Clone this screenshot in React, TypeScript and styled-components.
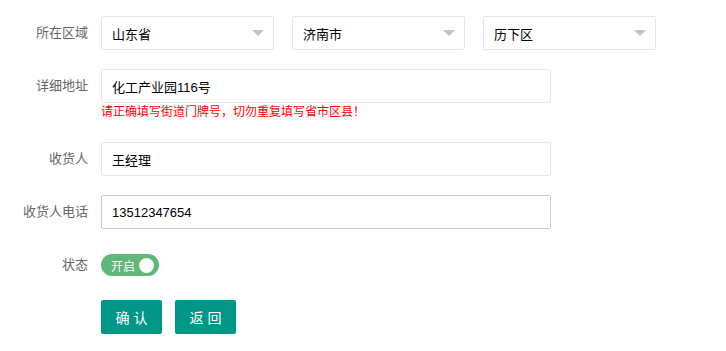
import React from "react";
import styled, { createGlobalStyle } from "styled-components";

const GlobalStyle = createGlobalStyle`
  html, body {
    margin: 0;
    padding: 0;
    background: #fff;
  }
  body {
    font-family: "Liberation Sans", "Noto Sans CJK SC", sans-serif;
    font-size: 13px;
    color: #333;
  }
`;

export const Form = styled.form`
  display: flex;
  flex-direction: column;
  padding-top: 16px;
`;

export const FormItem = styled.div<{ $gap?: number }>`
  display: flex;
  align-items: flex-start;
  margin-bottom: ${(p) => (p.$gap ?? 19)}px;
`;

export const Label = styled.label<{ $h?: number }>`
  width: 88px;
  padding-right: 13px;
  flex-shrink: 0;
  text-align: right;
  color: #666;
  font-size: 13px;
  line-height: ${(p) => p.$h ?? 34}px;
  white-space: nowrap;
`;

export const Block = styled.div`
  display: flex;
  flex-direction: column;
`;

export const Inline = styled.div`
  display: flex;
  gap: 18px;
`;

export const Input = styled.div<{ $active?: boolean; $w?: number }>`
  box-sizing: border-box;
  width: ${(p) => p.$w ?? 450}px;
  height: 34px;
  padding: 0 10px;
  border: 1px solid ${(p) => (p.$active ? "#c9c9c9" : "#e6e6e6")};
  border-radius: 2px;
  background: #fff;
  display: flex;
  align-items: center;
  font-size: 13px;
  color: #000;
`;

export const Select = styled(Input)`
  justify-content: space-between;
`;

export const Arrow = styled.i`
  width: 0;
  height: 0;
  border-style: solid;
  border-width: 6px 6px 0 6px;
  border-color: #c2c2c2 transparent transparent transparent;
  margin-right: -1px;
`;

export const Hint = styled.div`
  color: #ff0000;
  font-size: 12px;
  line-height: 16px;
  margin-top: 1px;
`;

export const Switch = styled.div`
  box-sizing: border-box;
  width: 58px;
  height: 22px;
  border-radius: 11px;
  background: #5fb878;
  display: flex;
  align-items: center;
  justify-content: space-between;
  padding: 0 5px 0 10px;
  color: #fff;
  font-size: 12px;
`;

export const Knob = styled.span`
  width: 15px;
  height: 15px;
  border-radius: 50%;
  background: #fff;
`;

export const Buttons = styled.div`
  display: flex;
  gap: 13px;
  padding-left: 101px;
`;

export const Button = styled.button`
  box-sizing: border-box;
  width: 61px;
  height: 34px;
  border: none;
  border-radius: 2px;
  background: #009688;
  color: #fff;
  font-family: "Liberation Sans", "Noto Sans CJK SC", sans-serif;
  font-size: 14px;
  letter-spacing: 4px;
  padding: 0 0 0 4px;
  cursor: pointer;
`;

const regions = ["山东省", "济南市", "历下区"];

export default function App() {
  return (
    <>
      <GlobalStyle />
      <Form>
        <FormItem>
          <Label>所在区域</Label>
          <Inline>
            {regions.map((r) => (
              <Select key={r} $w={173}>
                <span>{r}</span>
                <Arrow />
              </Select>
            ))}
          </Inline>
        </FormItem>
        <FormItem $gap={22}>
          <Label>详细地址</Label>
          <Block>
            <Input>化工产业园116号</Input>
            <Hint>请正确填写街道门牌号，切勿重复填写省市区县！</Hint>
          </Block>
        </FormItem>
        <FormItem>
          <Label>收货人</Label>
          <Input>王经理</Input>
        </FormItem>
        <FormItem $gap={25}>
          <Label>收货人电话</Label>
          <Input $active>13512347654</Input>
        </FormItem>
        <FormItem $gap={24}>
          <Label $h={22}>状态</Label>
          <Switch>
            开启
            <Knob />
          </Switch>
        </FormItem>
        <Buttons>
          <Button type="button">确认</Button>
          <Button type="button">返回</Button>
        </Buttons>
      </Form>
    </>
  );
}
